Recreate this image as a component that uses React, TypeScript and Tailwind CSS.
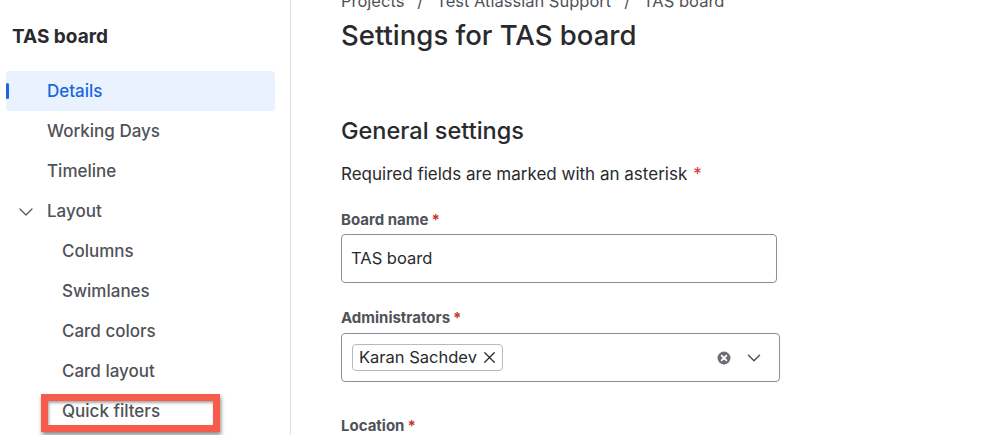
import { ChevronDown, X } from "lucide-react";

const navItems = [
  { label: "Details", active: true },
  { label: "Working Days" },
  { label: "Timeline" },
];

const layoutItems = ["Columns", "Swimlanes", "Card colors", "Card layout"];

function Required({ gap = "ml-[3px]" }: { gap?: string }) {
  return <span className={`${gap} text-[#c9372c]`}>*</span>;
}

function ClearIcon() {
  return (
    <svg width="14" height="14" viewBox="0 0 14 14">
      <circle cx="7" cy="7" r="6.5" fill="#6b6e76" />
      <path d="M4.6 4.6l4.8 4.8M9.4 4.6l-4.8 4.8" stroke="#fff" strokeWidth="1.8" strokeLinecap="round" />
    </svg>
  );
}

export default function App() {
  return (
    <div className="flex h-[435px] overflow-hidden bg-white font-['Inter',sans-serif] text-[#292a2e]">
      <aside className="w-[291px] shrink-0 border-r border-[#dddee1]">
        <div className="pl-3 pt-[25px] text-[19px] leading-6 font-bold">TAS board</div>
        <nav className="mt-[22px] pl-[6px] pr-[15px] text-[17px] font-medium text-[#505258]">
          {navItems.map((item) =>
            item.active ? (
              <div
                key={item.label}
                className="relative flex h-10 items-center rounded-[4px] bg-[#e9f2fe] pl-[41px] pt-[2px] text-[#1868db]"
              >
                <span className="absolute left-0 top-3 h-4 w-[3px] rounded-sm bg-[#1868db]" />
                {item.label}
              </div>
            ) : (
              <div key={item.label} className="flex h-10 items-center pl-[41px] pt-[2px]">
                {item.label}
              </div>
            )
          )}
          <div className="flex h-10 items-center pl-[8px] pt-[2px]">
            <ChevronDown className="mr-[9px] h-6 w-6" strokeWidth={1.2} />
            Layout
          </div>
          {layoutItems.map((label) => (
            <div key={label} className="flex h-10 items-center pl-[56px] pt-[2px]">
              {label}
            </div>
          ))}
          <div className="relative flex h-10 items-center pl-[56px] pt-[2px]">
            Quick filters
            <span className="absolute left-[35px] top-[3px] h-[38px] w-[179px] border-[7px] border-[#f65b4c] shadow-[1px_3px_4px_rgba(0,0,0,0.45),inset_1px_2px_3px_rgba(0,0,0,0.35)]" />
          </div>
        </nav>
      </aside>

      <main className="flex-1 pl-[50px]">
        <div className="-mt-[9px] flex items-center gap-[13px] text-[16.5px] leading-5 text-[#505258]">
          <span>Projects</span>
          <span>/</span>
          <span>Test Atlassian Support</span>
          <span>/</span>
          <span>TAS board</span>
        </div>
        <h1 className="mt-2 text-[27.5px] leading-8 font-medium">Settings for TAS board</h1>

        <h2 className="mt-[66px] text-[23.5px] leading-7 font-medium">General settings</h2>
        <p className="mt-[17px] text-[17px] leading-6">
          Required fields are marked with an asterisk
          <Required gap="ml-[6px]" />
        </p>

        <div className="mt-6 text-[15px] leading-5 font-bold text-[#505258]">
          Board name
          <Required />
        </div>
        <div className="mt-1 flex h-[49px] w-[436px] items-center rounded-[4px] border border-[#8c8f97] px-[9px] text-[16.5px]">
          TAS board
        </div>

        <div className="mt-[25px] text-[15px] leading-5 font-bold text-[#505258]">
          Administrators
          <Required />
        </div>
        <div className="mt-[5px] flex h-[49px] w-[439px] items-center rounded-[4px] border border-[#8c8f97] pl-[10px] pr-[14px]">
          <div className="flex h-[27px] items-center gap-[3px] rounded-[4px] border border-[#b7b9be] pl-[6px] pr-[3px] text-[16.5px]">
            Karan Sachdev
            <X className="h-[19px] w-[19px]" strokeWidth={1.6} />
          </div>
          <div className="ml-auto flex items-center gap-[12px]">
            <ClearIcon />
            <ChevronDown className="h-[22px] w-[22px] text-[#505258]" strokeWidth={1.6} />
          </div>
        </div>

        <div className="mt-[34px] text-[15px] leading-5 font-bold text-[#505258]">
          Location
          <Required />
        </div>
      </main>
    </div>
  );
}
